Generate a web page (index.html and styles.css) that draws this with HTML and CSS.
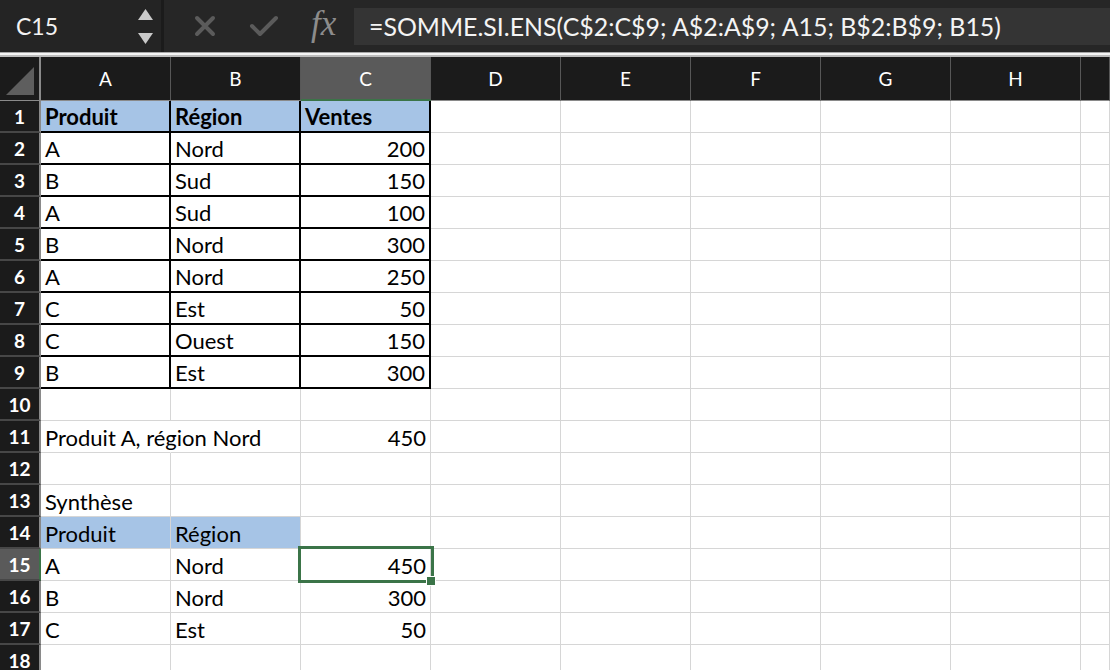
FILE: index.html
```html
<!DOCTYPE html>
<html lang="fr">
<head>
    <meta charset="UTF-8">
    <title>Classeur - SOMME.SI.ENS</title>
    <link rel="stylesheet" href="styles.css">
</head>
<body>
    <!-- Formula bar -->
    <div class="formula-bar">
        <div class="name-box">
            <span class="cell-ref">C15</span>
            <div class="spinner">
                <svg width="15" height="11" viewBox="0 0 15 11"><polygon points="7.5,0 15,11 0,11" fill="#c9c9c9"/></svg>
                <svg width="15" height="11" viewBox="0 0 15 11"><polygon points="0,0 15,0 7.5,11" fill="#c9c9c9"/></svg>
            </div>
        </div>
        <div class="bar-tools">
            <svg class="tool-cancel" width="22" height="22" viewBox="0 0 22 22">
                <path d="M3 3 L19 19 M19 3 L3 19" stroke="#5b5b5b" stroke-width="4" stroke-linecap="round"/>
            </svg>
            <svg class="tool-ok" width="30" height="22" viewBox="0 0 30 22">
                <path d="M3 11 L11 19 L27 3" stroke="#5b5b5b" stroke-width="4" fill="none" stroke-linecap="round" stroke-linejoin="round"/>
            </svg>
            <span class="tool-fx">fx</span>
        </div>
        <div class="formula-input">=SOMME.SI.ENS(C$2:C$9; A$2:A$9; A15; B$2:B$9; B15)</div>
    </div>
    <div class="bar-sep"></div>

    <!-- Sheet grid -->
    <div class="sheet">
        <!-- column headers -->
        <div class="corner"><span class="corner-tri"></span></div>
        <div class="col-head">A</div>
        <div class="col-head">B</div>
        <div class="col-head active">C</div>
        <div class="col-head">D</div>
        <div class="col-head">E</div>
        <div class="col-head">F</div>
        <div class="col-head">G</div>
        <div class="col-head">H</div>
        <div class="col-head"></div>

        <!-- row 1 -->
        <div class="row-head">1</div>
        <div class="cell fill bold boxed">Produit</div>
        <div class="cell fill bold boxed">Région</div>
        <div class="cell fill bold boxed">Ventes</div>
        <div class="cell"></div><div class="cell"></div><div class="cell"></div><div class="cell"></div><div class="cell"></div><div class="cell"></div>

        <!-- row 2 -->
        <div class="row-head">2</div>
        <div class="cell boxed">A</div>
        <div class="cell boxed">Nord</div>
        <div class="cell num boxed">200</div>
        <div class="cell"></div><div class="cell"></div><div class="cell"></div><div class="cell"></div><div class="cell"></div><div class="cell"></div>

        <!-- row 3 -->
        <div class="row-head">3</div>
        <div class="cell boxed">B</div>
        <div class="cell boxed">Sud</div>
        <div class="cell num boxed">150</div>
        <div class="cell"></div><div class="cell"></div><div class="cell"></div><div class="cell"></div><div class="cell"></div><div class="cell"></div>

        <!-- row 4 -->
        <div class="row-head">4</div>
        <div class="cell boxed">A</div>
        <div class="cell boxed">Sud</div>
        <div class="cell num boxed">100</div>
        <div class="cell"></div><div class="cell"></div><div class="cell"></div><div class="cell"></div><div class="cell"></div><div class="cell"></div>

        <!-- row 5 -->
        <div class="row-head">5</div>
        <div class="cell boxed">B</div>
        <div class="cell boxed">Nord</div>
        <div class="cell num boxed">300</div>
        <div class="cell"></div><div class="cell"></div><div class="cell"></div><div class="cell"></div><div class="cell"></div><div class="cell"></div>

        <!-- row 6 -->
        <div class="row-head">6</div>
        <div class="cell boxed">A</div>
        <div class="cell boxed">Nord</div>
        <div class="cell num boxed">250</div>
        <div class="cell"></div><div class="cell"></div><div class="cell"></div><div class="cell"></div><div class="cell"></div><div class="cell"></div>

        <!-- row 7 -->
        <div class="row-head">7</div>
        <div class="cell boxed">C</div>
        <div class="cell boxed">Est</div>
        <div class="cell num boxed">50</div>
        <div class="cell"></div><div class="cell"></div><div class="cell"></div><div class="cell"></div><div class="cell"></div><div class="cell"></div>

        <!-- row 8 -->
        <div class="row-head">8</div>
        <div class="cell boxed">C</div>
        <div class="cell boxed">Ouest</div>
        <div class="cell num boxed">150</div>
        <div class="cell"></div><div class="cell"></div><div class="cell"></div><div class="cell"></div><div class="cell"></div><div class="cell"></div>

        <!-- row 9 -->
        <div class="row-head">9</div>
        <div class="cell boxed">B</div>
        <div class="cell boxed">Est</div>
        <div class="cell num boxed">300</div>
        <div class="cell"></div><div class="cell"></div><div class="cell"></div><div class="cell"></div><div class="cell"></div><div class="cell"></div>

        <!-- row 10 -->
        <div class="row-head">10</div>
        <div class="cell"></div><div class="cell"></div><div class="cell"></div>
        <div class="cell"></div><div class="cell"></div><div class="cell"></div><div class="cell"></div><div class="cell"></div><div class="cell"></div>

        <!-- row 11 -->
        <div class="row-head">11</div>
        <div class="cell spill">Produit A, région Nord</div>
        <div class="cell"></div>
        <div class="cell num">450</div>
        <div class="cell"></div><div class="cell"></div><div class="cell"></div><div class="cell"></div><div class="cell"></div><div class="cell"></div>

        <!-- row 12 -->
        <div class="row-head">12</div>
        <div class="cell"></div><div class="cell"></div><div class="cell"></div>
        <div class="cell"></div><div class="cell"></div><div class="cell"></div><div class="cell"></div><div class="cell"></div><div class="cell"></div>

        <!-- row 13 -->
        <div class="row-head">13</div>
        <div class="cell">Synthèse</div>
        <div class="cell"></div><div class="cell"></div>
        <div class="cell"></div><div class="cell"></div><div class="cell"></div><div class="cell"></div><div class="cell"></div><div class="cell"></div>

        <!-- row 14 -->
        <div class="row-head">14</div>
        <div class="cell fill">Produit</div>
        <div class="cell fill">Région</div>
        <div class="cell"></div>
        <div class="cell"></div><div class="cell"></div><div class="cell"></div><div class="cell"></div><div class="cell"></div><div class="cell"></div>

        <!-- row 15 -->
        <div class="row-head active">15</div>
        <div class="cell">A</div>
        <div class="cell">Nord</div>
        <div class="cell num selected">450<span class="fill-handle"></span></div>
        <div class="cell"></div><div class="cell"></div><div class="cell"></div><div class="cell"></div><div class="cell"></div><div class="cell"></div>

        <!-- row 16 -->
        <div class="row-head">16</div>
        <div class="cell">B</div>
        <div class="cell">Nord</div>
        <div class="cell num">300</div>
        <div class="cell"></div><div class="cell"></div><div class="cell"></div><div class="cell"></div><div class="cell"></div><div class="cell"></div>

        <!-- row 17 -->
        <div class="row-head">17</div>
        <div class="cell">C</div>
        <div class="cell">Est</div>
        <div class="cell num">50</div>
        <div class="cell"></div><div class="cell"></div><div class="cell"></div><div class="cell"></div><div class="cell"></div><div class="cell"></div>

        <!-- row 18 -->
        <div class="row-head">18</div>
        <div class="cell"></div><div class="cell"></div><div class="cell"></div>
        <div class="cell"></div><div class="cell"></div><div class="cell"></div><div class="cell"></div><div class="cell"></div><div class="cell"></div>
    </div>
</body>
</html>
```

FILE: styles.css
```css
/* Spreadsheet window */
body {
    margin: 0;
    width: 1110px;
    height: 670px;
    overflow: hidden;
    background-color: #ffffff;
    font-family: 'Lato', 'Liberation Sans', sans-serif;
}

/* Formula bar */
.formula-bar {
    display: flex;
    align-items: stretch;
    height: 52px;
    background-color: #262626;
}

.name-box {
    display: flex;
    align-items: center;
    justify-content: space-between;
    width: 164px;
    padding: 0 8px 0 16px;
    box-sizing: border-box;
    border-right: 3px solid #1b1b1b;
    background-color: #242424;
}

.cell-ref {
    color: #f2f2f2;
    font-size: 23px;
}

.spinner {
    display: flex;
    flex-direction: column;
    gap: 13px;
}

.bar-tools {
    display: flex;
    align-items: center;
    width: 190px;
    padding-left: 30px;
    box-sizing: border-box;
}

.tool-ok {
    margin-left: 33px;
}

.tool-fx {
    margin-left: 32px;
    color: #8c8c8c;
    font-family: 'Liberation Serif', serif;
    font-style: italic;
    font-size: 35px;
    line-height: 1;
    margin-top: -6px;
}

.formula-input {
    flex: 1;
    margin: 8px 0 7px;
    padding-left: 15px;
    background-color: #343434;
    color: #f4f4f4;
    font-size: 24.9px;
    line-height: 37px;
    white-space: nowrap;
}

.bar-sep {
    height: 5px;
    background: linear-gradient(#a8a8a8 0, #a8a8a8 1px, #f5f5f5 1px, #f5f5f5 3px, #bdbdbd 3px);
}

/* Grid */
.sheet {
    display: grid;
    grid-template-columns: 41px repeat(8, 130px) 1fr;
    grid-template-rows: 44px repeat(18, 32px);
    background-color: #ffffff;
}

.corner,
.col-head,
.row-head {
    background-color: #1b1b1b;
    color: #ffffff;
    box-sizing: border-box;
}

.corner {
    position: relative;
    border-right: 2px solid #8a8a8a;
    border-bottom: 1px solid #8a8a8a;
}

.corner-tri {
    position: absolute;
    right: 5px;
    bottom: 5px;
    width: 0;
    height: 0;
    border-left: 28px solid transparent;
    border-bottom: 28px solid #5e5e5e;
}

.col-head {
    display: flex;
    align-items: center;
    justify-content: center;
    font-size: 19px;
    border-right: 1px solid #575757;
    border-bottom: 1px solid #8a8a8a;
}

.col-head.active {
    background-color: #5a5a5a;
    border-bottom: 2px solid #3b7448;
}

.row-head {
    display: flex;
    align-items: center;
    justify-content: center;
    font-size: 19px;
    font-weight: bold;
    border-right: 2px solid #8a8a8a;
    border-bottom: 2px solid #474747;
}

.row-head.active {
    background-color: #5a5a5a;
    border-right: 2px solid #3b7448;
}

.cell {
    display: flex;
    align-items: center;
    padding: 1px 4px 0;
    box-sizing: border-box;
    border-right: 1px solid #d6d6d6;
    border-bottom: 1px solid #d6d6d6;
    font-size: 22px;
    color: #000000;
    white-space: nowrap;
}

.cell.num {
    justify-content: flex-end;
}

.cell.fill {
    background-color: #a6c4e6;
}

.cell.bold {
    font-weight: bold;
}

.cell.boxed {
    border-right: 2px solid #000000;
    border-bottom: 2px solid #000000;
}

/* text of A11 runs over into B11 */
.cell.spill {
    overflow: visible;
    border-right-color: transparent;
    position: relative;
    z-index: 1;
}

/* Active cell */
.cell.selected {
    position: relative;
}

.cell.selected::after {
    content: "";
    position: absolute;
    left: -3px;
    top: -3px;
    right: -4px;
    bottom: -3px;
    border: 3px solid #3b7448;
}

.fill-handle {
    position: absolute;
    right: -6px;
    bottom: -6px;
    width: 8px;
    height: 8px;
    background-color: #3b7448;
    border: 1px solid #ffffff;
    z-index: 2;
}
```
